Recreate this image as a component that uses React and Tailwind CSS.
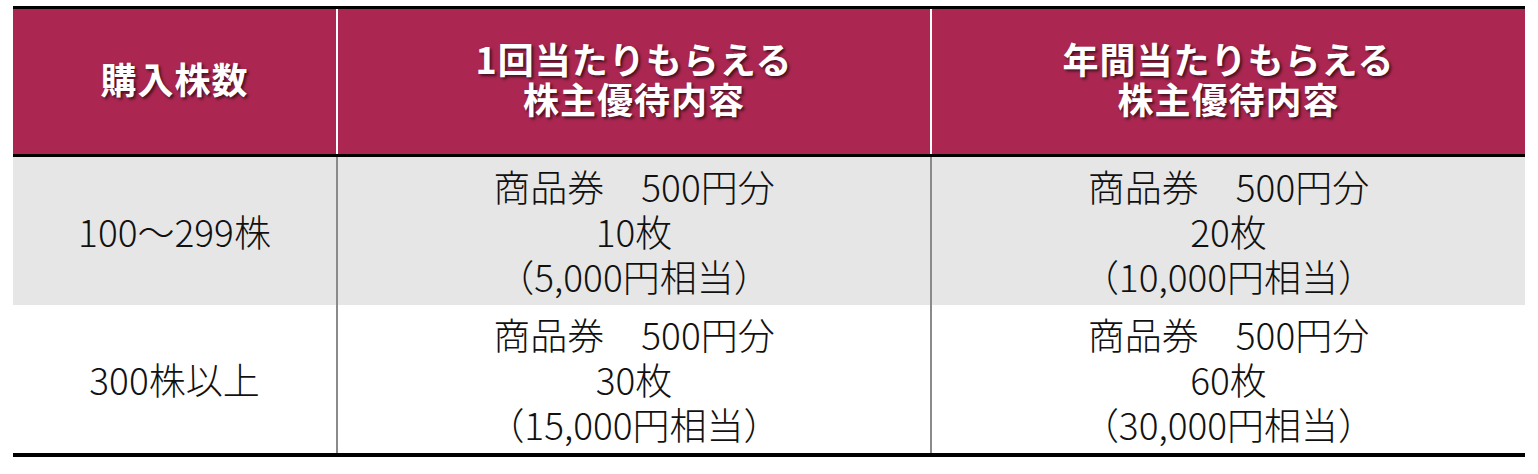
import React from "react";

const font = { fontFamily: '"Noto Sans CJK JP", "Noto Sans", sans-serif' };

function HeadCell({ children, className = "" }) {
  return (
    <div
      className={`flex flex-col items-center justify-center pb-[8px] text-white font-bold text-[36px] leading-[40px] tracking-[1px] [text-shadow:2px_2px_3px_rgba(0,0,0,0.6)] ${className}`}
    >
      {children}
    </div>
  );
}

function BodyCell({ lines, className = "" }) {
  return (
    <div
      className={`flex flex-col items-center justify-center text-[#111] font-light text-[37px] leading-[45px] ${className}`}
    >
      {lines.map((l, i) => (
        <div key={i} className="whitespace-pre">
          {l}
        </div>
      ))}
    </div>
  );
}

export default function App() {
  const rows = [
    {
      bg: "bg-[#e6e6e6]",
      a: ["100〜299株"],
      b: ["商品券　500円分", "10枚", "（5,000円相当）"],
      c: ["商品券　500円分", "20枚", "（10,000円相当）"],
    },
    {
      bg: "bg-white",
      a: ["300株以上"],
      b: ["商品券　500円分", "30枚", "（15,000円相当）"],
      c: ["商品券　500円分", "60枚", "（30,000円相当）"],
    },
  ];
  return (
    <div className="w-[1538px] h-[474px] bg-white pt-[6px] pl-[13px]" style={font}>
      <div className="w-[1512px] border-t-[3px] border-b-[4px] border-black">
        <div className="grid grid-cols-[323px_594px_595px] h-[148px] bg-[#ab2751] border-b-[3px] border-black">
          <HeadCell>
            <div>購入株数</div>
          </HeadCell>
          <HeadCell className="border-l-[2px] border-white">
            <div>1回当たりもらえる</div>
            <div>株主優待内容</div>
          </HeadCell>
          <HeadCell className="border-l-[2px] border-white">
            <div>年間当たりもらえる</div>
            <div>株主優待内容</div>
          </HeadCell>
        </div>
        {rows.map((r, i) => (
          <div key={i} className={`grid grid-cols-[323px_594px_595px] h-[148px] ${r.bg}`}>
            <BodyCell lines={r.a} />
            <BodyCell lines={r.b} className="border-l-[2px] border-[#8a8a8a]" />
            <BodyCell lines={r.c} className="border-l-[2px] border-[#8a8a8a]" />
          </div>
        ))}
      </div>
    </div>
  );
}
